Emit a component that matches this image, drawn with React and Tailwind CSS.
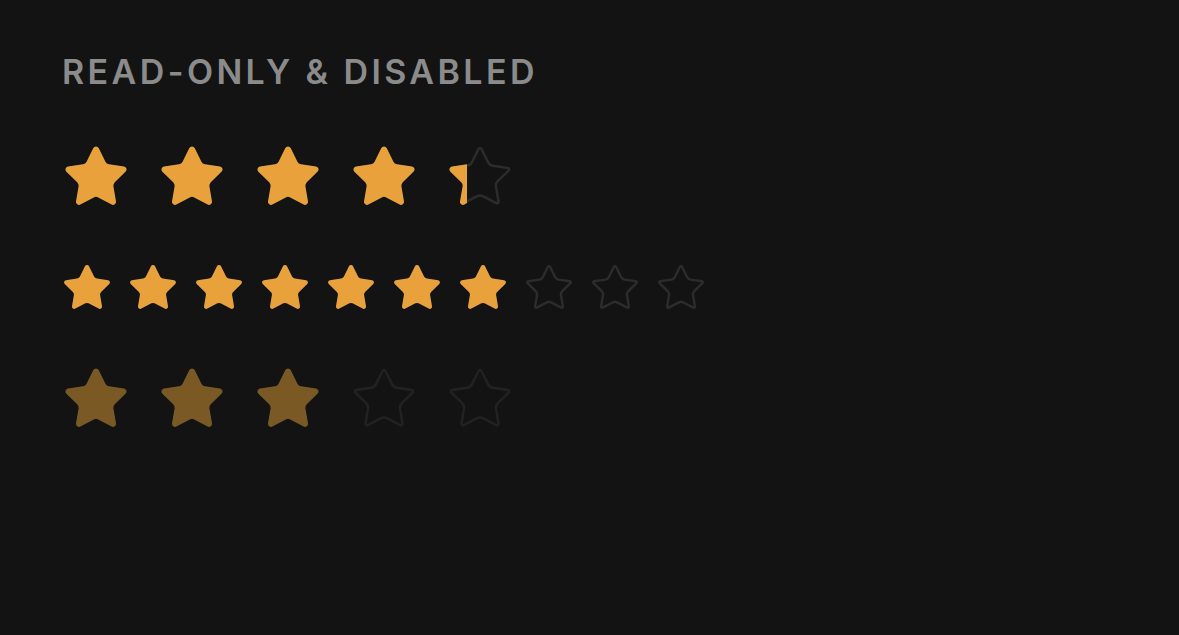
import React from 'react';

// Rounded five-point star, lucide geometry
const STAR_PATH =
  'M11.525 2.295a.53.53 0 0 1 .95 0l2.31 4.679a2.123 2.123 0 0 0 1.595 1.16l5.166.756a.53.53 0 0 1 .294.904l-3.736 3.638a2.123 2.123 0 0 0-.611 1.878l.882 5.14a.53.53 0 0 1-.771.56l-4.618-2.428a2.122 2.122 0 0 0-1.973 0L6.396 21.01a.53.53 0 0 1-.77-.56l.881-5.139a2.122 2.122 0 0 0-.611-1.879L2.16 9.795a.53.53 0 0 1 .294-.906l5.165-.755a2.122 2.122 0 0 0 1.597-1.16z';

const StarGlyph = ({ filled, color, size, emptyStroke }) => (
  <svg width={size} height={size} viewBox="1 1 22 22" className="block">
    {filled ? (
      <path d={STAR_PATH} fill={color} stroke={color} strokeWidth="1" strokeLinejoin="round" />
    ) : (
      <path d={STAR_PATH} fill="none" stroke={color} strokeWidth={emptyStroke} strokeLinejoin="round" />
    )}
  </svg>
);

/**
 * Read-only rating row. Fractional values clip the filled star over an empty one.
 */
const Rating = ({ value, max = 5, size = 64, gap = 32, fill = '#e9a23b', empty = '#2c2c2c', emptyStroke = 0.85, className = '' }) => {
  const stars = Array.from({ length: max }, (_, i) => {
    const portion = Math.max(0, Math.min(1, value - i));
    return (
      <div key={i} className="relative shrink-0" style={{ width: size, height: size }}>
        <StarGlyph filled={false} color={empty} size={size} emptyStroke={emptyStroke} />
        {portion > 0 && (
          <div className="absolute left-0 top-0 h-full overflow-hidden" style={{ width: `${portion * 100}%` }}>
            <StarGlyph filled color={fill} size={size} />
          </div>
        )}
      </div>
    );
  });

  return (
    <div className={`flex items-center ${className}`} style={{ gap }}>
      {stars}
    </div>
  );
};

export default function App() {
  return (
    <div className="min-h-screen w-full bg-[#131313] pl-[64px] pt-[52px] font-['Inter','Liberation_Sans',sans-serif]">
      <h2 className="-ml-[2px] mb-[53px] text-[34px] font-semibold uppercase leading-[40px] tracking-[0.1em] text-[#8b8b8b]">
        Read-only &amp; Disabled
      </h2>

      <div className="flex flex-col gap-[55px]">
        {/* half-step value */}
        <Rating value={4.3} />

        {/* ten-star scale, smaller */}
        <Rating value={7} max={10} size={48} gap={18} emptyStroke={1.1} className="-ml-[1px]" />

        {/* disabled: dimmed */}
        <Rating value={3} fill="#7b5924" empty="#222222" />
      </div>
    </div>
  );
}
